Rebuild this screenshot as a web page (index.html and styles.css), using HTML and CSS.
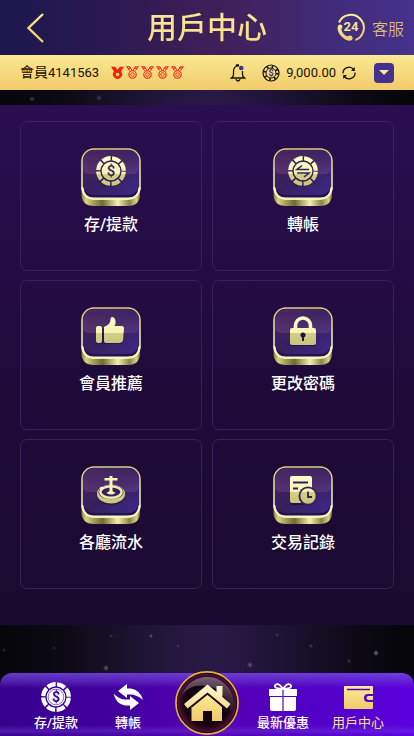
FILE: index.html
```html
<!DOCTYPE html>
<html lang="zh-Hant">
<head>
<meta charset="utf-8">
<meta name="viewport" content="width=device-width, initial-scale=1">
<title>用戶中心</title>
<link rel="stylesheet" href="styles.css">
</head>
<body>
<svg class="defs" width="0" height="0" aria-hidden="true">
  <defs>
    <linearGradient id="gold" x1="0" y1="0" x2="0" y2="1"><stop offset="0" stop-color="#fbeb98"/><stop offset="1" stop-color="#f0ca6b"/></linearGradient>
    <linearGradient id="roof" x1="0" y1="0" x2="0" y2="1"><stop offset="0" stop-color="#fff6d2"/><stop offset="1" stop-color="#f5dc92"/></linearGradient>
    <linearGradient id="side" x1="0" x2="1" y1="0" y2="0"><stop offset="0" stop-color="#858044"/><stop offset=".08" stop-color="#d8d486"/><stop offset=".2" stop-color="#a7a25a"/><stop offset=".36" stop-color="#6e6a32"/><stop offset=".62" stop-color="#f4f0ae"/><stop offset=".82" stop-color="#898448"/><stop offset=".94" stop-color="#d6d184"/><stop offset="1" stop-color="#77723b"/></linearGradient>
    <linearGradient id="rim" x1="0" x2="0" y1="0" y2="1"><stop offset="0" stop-color="#d6cf7e"/><stop offset=".5" stop-color="#f6f3b6"/><stop offset="1" stop-color="#ffffd0"/></linearGradient>
    <linearGradient id="face" x1="0" x2="1" y1="0" y2="1"><stop offset="0" stop-color="#45225e"/><stop offset=".5" stop-color="#35205e"/><stop offset="1" stop-color="#3e2887"/></linearGradient>
    <linearGradient id="gloss" x1="0" x2="0" y1="0" y2="1"><stop offset="0" stop-color="#a45e9a" stop-opacity=".04"/><stop offset="1" stop-color="#a564a0" stop-opacity=".26"/></linearGradient>
    <linearGradient id="cream" gradientUnits="userSpaceOnUse" x1="0" y1="8" x2="0" y2="40"><stop offset="0" stop-color="#ffffd0"/><stop offset=".55" stop-color="#f5f2b3"/><stop offset=".56" stop-color="#d5ce87"/><stop offset="1" stop-color="#c9c27a"/></linearGradient>
    <radialGradient id="orb" cx=".5" cy=".5" r=".5"><stop offset="0" stop-color="#16020e"/><stop offset=".72" stop-color="#16030f"/><stop offset=".9" stop-color="#42102f"/><stop offset="1" stop-color="#7a2459"/></radialGradient>
    <linearGradient id="shine" x1="0" x2="0" y1="0" y2="1"><stop offset="0" stop-color="#d3c3d3" stop-opacity=".8"/><stop offset="1" stop-color="#8d6f8b" stop-opacity=".2"/></linearGradient>
    <symbol id="tile" viewBox="0 0 60 60">
      <path d="M.5 38V46Q.5 58 13 58H47Q59 58 59 46V38Z" fill="url(#side)"/>
      <rect x="1" y="1" width="58" height="50" rx="12" fill="#211250" stroke="url(#rim)" stroke-width="1.5"/>
      <path d="M1.500 39Q2 50.500 13 50.500H47Q58 50.500 58.500 39" fill="none" stroke="#f9f6bd" stroke-width="2"/>
      <rect x="2" y="2" width="56" height="45" rx="11" fill="url(#face)"/>
      <path d="M2 13Q2 2 13 2H47Q58 2 58 13V22Q57 26 51 26H9Q3 26 2 22Z" fill="url(#gloss)"/>
    </symbol>
    <symbol id="chip" viewBox="0 0 30 30">
      <circle cx="15" cy="15" r="12.800" fill="none" stroke="currentColor" stroke-width="4.200" stroke-dasharray="8.550 1.500" stroke-dashoffset="-.75"/>
      <circle cx="15" cy="15" r="9.300" fill="currentColor"/>
    </symbol>
    <symbol id="medal" viewBox="0 0 13 13">
      <path d="M1 .8 3.500 4.700M3.700.8 6 4.400M12 .8 9.500 4.700M9.300.8 7 4.400M.3.8H4M9 .8h3.700M2 2.500l3-.6M8 1.900l3 .6" fill="none" stroke="#f5200c" stroke-width="1"/>
      <circle cx="6.500" cy="8.500" r="3.700" fill="none" stroke="#f5200c" stroke-width="1.100"/><circle cx="6.500" cy="8.500" r="1.800" fill="none" stroke="#f5200c" stroke-width=".9"/>
    </symbol>
  </defs>
</svg>

<header class="topbar">
  <button class="back" type="button" aria-label="返回">
    <svg width="20" height="32" viewBox="0 0 20 32"><path d="M17 2 2.500 16 17 30" fill="none" stroke="url(#gold)" stroke-width="2.400"/></svg>
  </button>
  <h1 class="title">用戶中心</h1>
  <a class="service" href="#service">
    <svg width="30" height="30" viewBox="0 0 30 30">
      <path d="M3 9.500A13 13 0 1 1 19.500 27" fill="none" stroke="url(#gold)" stroke-width="2"/>
      <path d="M2.400 12.200c1.600-1.600 4-.6 4 1.500 0 1.500-1.300 2-1 3.400.7 2.500 2.700 4.800 5 6 1.500.7 2.200-1 4-.6 2.200.6 3 3 1.500 4.400-2 1.800-6 .4-9-2.200C3.200 21.600 0 16 2.400 12.200Z" fill="url(#gold)"/>
      <text class="service-24" x="15" y="18">24</text>
    </svg>
    <span>客服</span>
  </a>
</header>

<section class="account" aria-label="會員">
  <span class="member">會員<span class="num">4141563</span></span>
  <span class="medals">
    <svg width="13" height="13" viewBox="0 0 13 13"><path d="M0 .8h4.200L6.500 4 8.800.8H13L10 5.500A4.500 4.500 0 1 1 3 5.500Z" fill="#f5200c"/><circle cx="6.500" cy="8.500" r="1.800" fill="#f8da7e"/></svg>
    <svg width="13" height="13"><use href="#medal"/></svg>
    <svg width="13" height="13"><use href="#medal"/></svg>
    <svg width="13" height="13"><use href="#medal"/></svg>
    <svg width="13" height="13"><use href="#medal"/></svg>
  </span>
  <button class="icon-btn bell" type="button" aria-label="通知">
    <svg width="16" height="18" viewBox="0 0 16 18"><path d="M9 2C5 1.400 3.500 4.500 3.500 7.500V10.500Q3.500 12.500 1.500 14H14.500Q12.500 12.500 12.500 10.500V7M6.500 2V1H9M6 15Q6.300 17 8 17T10 15" fill="none" stroke="#181300" stroke-width="1.300"/><circle cx="11.200" cy="4" r="2.300" fill="#44308d"/></svg>
  </button>
  <span class="balance">
    <svg width="18" height="18" viewBox="0 0 18 18"><circle cx="9" cy="9" r="8" fill="none" stroke="#181300" stroke-width="1.200"/><circle cx="9" cy="9" r="6.400" fill="none" stroke="#181300" stroke-width="2.600" stroke-dasharray="1.600 3.430"/><circle cx="9" cy="9" r="5" fill="none" stroke="#181300"/><text class="mini-dollar" x="9" y="12">$</text></svg>
    <span class="num">9,000.00</span>
  </span>
  <button class="icon-btn refresh" type="button" aria-label="重新整理">
    <svg width="14" height="14" viewBox="0 0 14 14"><path d="M1 7.500A6 6 0 0 1 11.700 3.500M13 6.500A6 6 0 0 1 2.300 10.500" fill="none" stroke="#181300" stroke-width="1.300"/><path d="M12.800 1V5H9ZM1.200 13V9H5Z" fill="#181300"/></svg>
  </button>
  <button class="more" type="button" aria-label="更多">
    <svg width="10" height="5" viewBox="0 0 10 5"><path d="M0 0H10L5 5Z" fill="#fbe998"/></svg>
  </button>
</section>

<main class="panel">
  <a class="card" href="#wallet">
    <svg width="60" height="60" viewBox="0 0 60 60"><use href="#tile" width="60" height="60"/>
      <circle cx="30" cy="24" r="14.900" fill="#120a33" opacity=".4"/>
      <circle cx="30" cy="23" r="12.800" fill="none" stroke="url(#cream)" stroke-width="4.200" stroke-dasharray="8.550 1.500" stroke-dashoffset="-.75"/><circle cx="30" cy="23" r="9.300" fill="url(#cream)"/><text class="tile-dollar" x="30" y="28">$</text></svg>
    <span>存/提款</span>
  </a>
  <a class="card" href="#transfer">
    <svg width="60" height="60" viewBox="0 0 60 60"><use href="#tile" width="60" height="60"/>
      <circle cx="30" cy="24" r="14.900" fill="#120a33" opacity=".4"/>
      <circle cx="30" cy="23" r="12.800" fill="none" stroke="url(#cream)" stroke-width="4.200" stroke-dasharray="8.550 1.500" stroke-dashoffset="-.75"/><circle cx="30" cy="23" r="9.300" fill="url(#cream)"/><path d="M36 21.500H24L29 17.500M24 25H36L31 29" fill="none" stroke="#33205f" stroke-width="1.600"/></svg>
    <span>轉帳</span>
  </a>
  <a class="card" href="#referral">
    <svg width="60" height="60" viewBox="0 0 60 60"><use href="#tile" width="60" height="60"/>
      <path d="M15 21H21V22L28 18 31 11 35 17 34 20H43V24L41 37H15Z" fill="#120a33" opacity=".45"/>
      <g fill="url(#cream)"><rect x="15" y="19" width="6" height="17" rx="2"/><path d="M23 20Q24 19 26 18.500 29.500 16 29.500 12Q29.500 10 31.500 10Q34 10.500 34.500 14Q35 16.500 33.500 19H41Q43.500 19.500 43 22L42 33Q41.500 36 38 36H26Q23 36 23 34Z"/></g></svg>
    <span>會員推薦</span>
  </a>
  <a class="card" href="#password">
    <svg width="60" height="60" viewBox="0 0 60 60"><use href="#tile" width="60" height="60"/>
      <rect x="17" y="22" width="26" height="17" rx="2" fill="#120a33" opacity=".6"/>
      <path d="M22.500 22V18.500A7.500 7.500 0 0 1 37.500 18.500V22" fill="none" stroke="url(#cream)" stroke-width="3.600"/><rect x="17" y="21" width="26" height="17" rx="2" fill="url(#cream)"/><path d="M31 30.500V34H29V30.500A2.600 2.600 0 1 1 31 30.500Z" fill="#21133f"/></svg>
    <span>更改密碼</span>
  </a>
  <a class="card" href="#turnover">
    <svg width="60" height="60" viewBox="0 0 60 60"><use href="#tile" width="60" height="60"/>
      <ellipse cx="30" cy="29.500" rx="14" ry="9.500" fill="#120a33" opacity=".6"/>
      <ellipse cx="30" cy="28" rx="14" ry="9.500" fill="url(#cream)"/><ellipse cx="30" cy="26" rx="12.500" ry="7.300" fill="#37205f"/><ellipse cx="30" cy="26" rx="10.600" ry="5.800" fill="none" stroke="#eeeab0" stroke-width="2.400"/><path d="M28.500 25V14.500H23.500V12H28.500V10H31.500V12H36.500V14.500H31.500V25L34.500 27Q30 30 25.500 27Z" fill="#f8f5bb"/><circle cx="20.500" cy="22.500" r="1.800" fill="#f8f5bb"/></svg>
    <span>各廳流水</span>
  </a>
  <a class="card" href="#records">
    <svg width="60" height="60" viewBox="0 0 60 60"><use href="#tile" width="60" height="60"/>
      <rect x="17" y="11" width="22" height="28" rx="2" fill="#120a33" opacity=".6"/>
      <rect x="17" y="10" width="22" height="27" rx="2" fill="url(#cream)"/><path d="M20 16.500H35M20 22.500H25" stroke="#35205f" stroke-width="1.800"/><circle cx="35" cy="30" r="9.500" fill="#35205f"/><circle cx="35" cy="30" r="7.700" fill="url(#cream)"/><path d="M35 25.500V31H39" fill="none" stroke="#35205f" stroke-width="1.800"/></svg>
    <span>交易記錄</span>
  </a>
</main>

<nav class="tabs">
  <a class="tab" href="#wallet">
    <svg width="30" height="30" viewBox="0 0 30 30"><use href="#chip" width="30" height="30"/><circle cx="15" cy="15" r="7.800" fill="none" stroke="#4300a0" stroke-width=".6"/><text class="tab-dollar" x="15" y="20">$</text></svg>
    <span>存/提款</span>
  </a>
  <a class="tab" href="#transfer">
    <svg width="30" height="30" viewBox="0 0 30 30"><path d="M5 9 14 2V6.500H18Q27 8 30 18Q24 12.500 17 12.500H14V16ZM26 21 17 28V23.500H12Q3 22 .5 11.500Q6 17.500 13 17.500H17V14Z" fill="currentColor"/></svg>
    <span>轉帳</span>
  </a>
  <a class="home" href="#home" aria-label="首頁">
    <svg width="66" height="66" viewBox="0 0 66 66"><circle cx="33" cy="33" r="31" fill="url(#orb)" stroke="#dfb52c" stroke-width="1.800"/><circle cx="33" cy="33" r="29.600" fill="none" stroke="#2b061f" stroke-width="1.200"/><path d="M8 25A26.500 26.500 0 0 1 59 28Q61 38 56 41Q52 20 34 16Q16 13 8 25Z" fill="url(#shine)" opacity=".6"/><path d="M17.500 37 33.500 24 48 37V51H38V41H29V51H17.500Z" fill="url(#gold)"/><path d="M10 34 33.500 14.500 42.500 22V16H48.500V27L56.500 34 53 38.500 33.500 22.500 13.500 38.500Z" fill="url(#roof)"/><path d="M17.500 37 33.500 24 50 37.500" fill="none" stroke="#1d0715" stroke-width="1.300"/></svg>
  </a>
  <a class="tab" href="#offers">
    <svg width="30" height="30" viewBox="0 0 30 30"><path d="M15 7Q11 1 8 2.500Q5 5 10 6.500ZM15 7Q19 1 22 2.500Q25 5 20 6.500Z" fill="none" stroke="#fff" stroke-width="1.800"/><path d="M1 7H14.400V14H1ZM15.600 7H29V14H15.600ZM2 15H14.400V29H4Q2 29 2 27ZM15.600 15H28V27Q28 29 26 29H15.600Z" fill="#fff"/></svg>
    <span>最新優惠</span>
  </a>
  <a class="tab active" href="#user" aria-current="page">
    <svg width="30" height="30" viewBox="0 0 30 30"><path d="M2 4H29Q30 4 30 5V12H25Q21 12 21 16T25 20H30V26Q30 27 29 27H2Q1 27 1 26V5Q1 4 2 4Z" fill="url(#gold)"/><path d="M4 7.500H27" stroke="#5600bd" stroke-width="1.500"/><path d="M25.500 14H30V18H25.500A2 2 0 0 1 25.500 14Z" fill="url(#gold)"/></svg>
    <span>用戶中心</span>
  </a>
</nav>
</body>
</html>
```

FILE: styles.css
```css
* { box-sizing: border-box; }

body {
  margin: 0;
  min-height: 100vh;
  display: flex;
  flex-direction: column;
  font-family: Roboto, "Noto Sans CJK TC", sans-serif;
  color: #fff;
  background:
    radial-gradient(circle at 32px 99px, #45414c 0, transparent 3px),
    radial-gradient(circle at 99px 98px, #45414c 0, transparent 3px),
    radial-gradient(circle at 4px 650px, #33303a 0, transparent 2px),
    radial-gradient(circle at 54px 648px, #33303a 0, transparent 2px),
    radial-gradient(circle at 106px 668px, #67626f 0, transparent 3px),
    radial-gradient(circle at 111px 636px, #433d50 0, transparent 2px),
    radial-gradient(circle at 151px 636px, #6b6375 0, transparent 2px),
    radial-gradient(circle at 178px 646px, #433d50 0, transparent 2px),
    radial-gradient(circle at 250px 665px, #67626f 0, transparent 3px),
    radial-gradient(circle at 277px 635px, #433d50 0, transparent 2px),
    radial-gradient(circle at 311px 646px, #4b4456 0, transparent 2px),
    radial-gradient(circle at 349px 661px, #4b4456 0, transparent 2px),
    radial-gradient(circle at 376px 653px, #7a7581 0, transparent 3px),
    linear-gradient(90deg, #07060c, #0b0912 14%, #21163a 38%, #2a1946 52%, #20143a 65%, #0b0912 88%, #06050a);
}

a { color: inherit; text-decoration: none; }
button { padding: 0; border: 0; background: none; cursor: pointer; }
svg { display: block; flex: none; }
.defs { position: absolute; }

.topbar {
  height: 55px;
  padding: 0 10px;
  display: grid;
  grid-template-columns: 1fr auto 1fr;
  align-items: center;
  background: linear-gradient(90deg, #1d184d, #25184f 20%, #3d1e58 48%, #40215d 58%, #402b79 78%, #46318c);
}
.back { justify-self: start; margin-left: 16px; }
.title {
  margin: 0;
  font-size: 30px;
  line-height: 44px;
  font-weight: 500;
  background: linear-gradient(#fbeb98, #f4da80);
  background-clip: text;
  color: transparent;
}
.service {
  justify-self: end;
  display: flex;
  align-items: center;
  gap: 6px;
  font-size: 16px;
  font-weight: 300;
  color: #f1d77f;
}
.service-24 { font: 700 13px Roboto, sans-serif; text-anchor: middle; fill: #f8e28c; }

.account {
  height: 35px;
  padding: 0 20px;
  display: flex;
  align-items: center;
  color: #181300;
  font-size: 14px;
  line-height: 20px;
  background: linear-gradient(#fae993, #f1cb6b);
}
.num { font-size: 13px; }
.medals { display: flex; gap: 2px; margin-left: 12px; }
.bell { margin-left: auto; }
.balance { display: flex; align-items: center; gap: 6px; margin-left: 16px; }
.mini-dollar { font: 700 9px Roboto, sans-serif; text-anchor: middle; fill: #44308d; }
.refresh { margin-left: 6px; }
.more {
  width: 20px;
  height: 20px;
  margin-left: 18px;
  display: grid;
  place-items: center;
  border-radius: 4px;
  background: #44308d;
}

.panel {
  margin-top: 15px;
  padding: 16px 20px 36px;
  display: grid;
  grid-template-columns: 1fr 1fr;
  gap: 9px 10px;
  background: linear-gradient(#2a0e50, #1e0b3a 55%, #1a0a30);
}
.card {
  height: 150px;
  padding-top: 26px;
  display: flex;
  flex-direction: column;
  align-items: center;
  gap: 5px;
  border: 1px solid #38215c;
  border-radius: 7px;
  font-size: 16px;
  line-height: 24px;
  font-weight: 500;
}
.tile-dollar { font: 500 15px Roboto, sans-serif; text-anchor: middle; fill: #33205f; }

.tabs {
  height: 63px;
  margin-top: auto;
  padding: 0 11px 0 17px;
  display: grid;
  grid-template-columns: 78fr 66fr 92fr 60fr 90fr;
  border-radius: 12px 12px 0 0;
  background:
    linear-gradient(#ffffff00 52px, #7a4ee855 58px, #ffffff00 63px),
    linear-gradient(#7b5ae6aa, #6640cc77 9px, #ffffff00 15px),
    linear-gradient(90deg, #37008c, #43009f 30%, #5600b3 50%, #5000c0 70%, #5b00df);
}
.tab {
  padding-top: 9px;
  display: flex;
  flex-direction: column;
  align-items: center;
  gap: 1px;
  font-size: 13px;
  line-height: 20px;
  font-weight: 500;
  white-space: nowrap;
}
.tab.active { color: #f9e58f; font-weight: 400; }
.tab-dollar { font: 700 14px Roboto, sans-serif; text-anchor: middle; fill: #4300a0; }
.home { justify-self: center; margin-top: -3px; }
```
